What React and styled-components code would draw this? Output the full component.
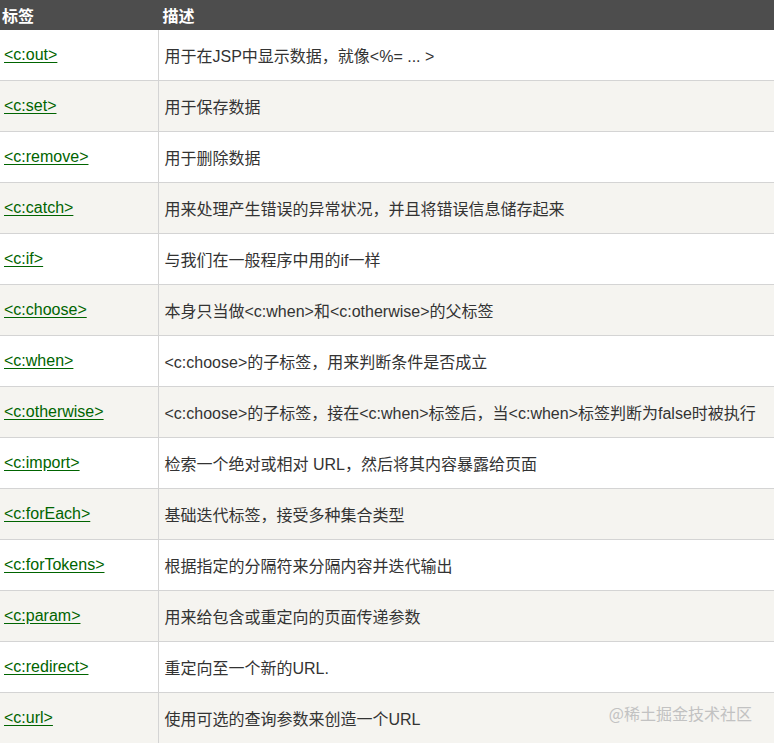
import styled, { createGlobalStyle } from 'styled-components';

const GlobalStyle = createGlobalStyle`
    html, body {
        margin: 0;
        padding: 0;
        background: #fff;
        overflow: hidden;
    }
    body {
        font-family: "Liberation Sans", Arial, "Noto Sans CJK SC", sans-serif;
        font-size: 16px;
        color: #333;
    }
`;

const Wrap = styled.div`
    position: relative;
    width: 774px;
    height: 743px;
    overflow: hidden;
`;

const Table = styled.table`
    width: 774px;
    border-collapse: collapse;
    table-layout: fixed;
`;

const HeadCell = styled.th`
    background: #4d4d4d;
    color: #fff;
    font-weight: bold;
    font-size: 16px;
    text-align: left;
    height: 30px;
    padding: 0 ${p => p.$first ? '2px' : '4px'};
    width: ${p => p.$first ? '158px' : 'auto'};
    box-sizing: border-box;
    border-right: ${p => p.$first ? '1px solid #4d4d4d' : 'none'};
`;

const Row = styled.tr`
    background: ${p => p.$alt ? '#f5f4f0' : '#fff'};
    border-bottom: 1px solid #d4d4d4;
`;

const Cell = styled.td`
    height: 50px;
    padding: 0 ${p => p.$first ? '4px' : '6px'};
    vertical-align: middle;
    border-right: ${p => p.$first ? '1px solid #d4d4d4' : 'none'};
    white-space: nowrap;
    color: #333;
`;

const TagLink = styled.a`
    color: #006400;
    text-decoration: underline;
    text-underline-offset: 2px;
`;

const Watermark = styled.div`
    position: absolute;
    right: 22px;
    bottom: 18px;
    font-size: 16px;
    color: #c2c2c2;
    font-family: "Noto Sans CJK SC", sans-serif;
`;

const rows = [
    ['<c:out>', '用于在JSP中显示数据，就像<%= ... >'],
    ['<c:set>', '用于保存数据'],
    ['<c:remove>', '用于删除数据'],
    ['<c:catch>', '用来处理产生错误的异常状况，并且将错误信息储存起来'],
    ['<c:if>', '与我们在一般程序中用的if一样'],
    ['<c:choose>', '本身只当做<c:when>和<c:otherwise>的父标签'],
    ['<c:when>', '<c:choose>的子标签，用来判断条件是否成立'],
    ['<c:otherwise>', '<c:choose>的子标签，接在<c:when>标签后，当<c:when>标签判断为false时被执行'],
    ['<c:import>', '检索一个绝对或相对 URL，然后将其内容暴露给页面'],
    ['<c:forEach>', '基础迭代标签，接受多种集合类型'],
    ['<c:forTokens>', '根据指定的分隔符来分隔内容并迭代输出'],
    ['<c:param>', '用来给包含或重定向的页面传递参数'],
    ['<c:redirect>', '重定向至一个新的URL.'],
    ['<c:url>', '使用可选的查询参数来创造一个URL'],
];

export default function App() {
    return (
        <Wrap>
            <GlobalStyle />
            <Table>
                <thead>
                    <tr>
                        <HeadCell $first>标签</HeadCell>
                        <HeadCell>描述</HeadCell>
                    </tr>
                </thead>
                <tbody>
                    {rows.map(([tag, desc], i) => (
                        <Row key={tag} $alt={i % 2 === 1}>
                            <Cell $first><TagLink href="#">{tag}</TagLink></Cell>
                            <Cell>{desc}</Cell>
                        </Row>
                    ))}
                </tbody>
            </Table>
            <Watermark>@稀土掘金技术社区</Watermark>
        </Wrap>
    );
}
